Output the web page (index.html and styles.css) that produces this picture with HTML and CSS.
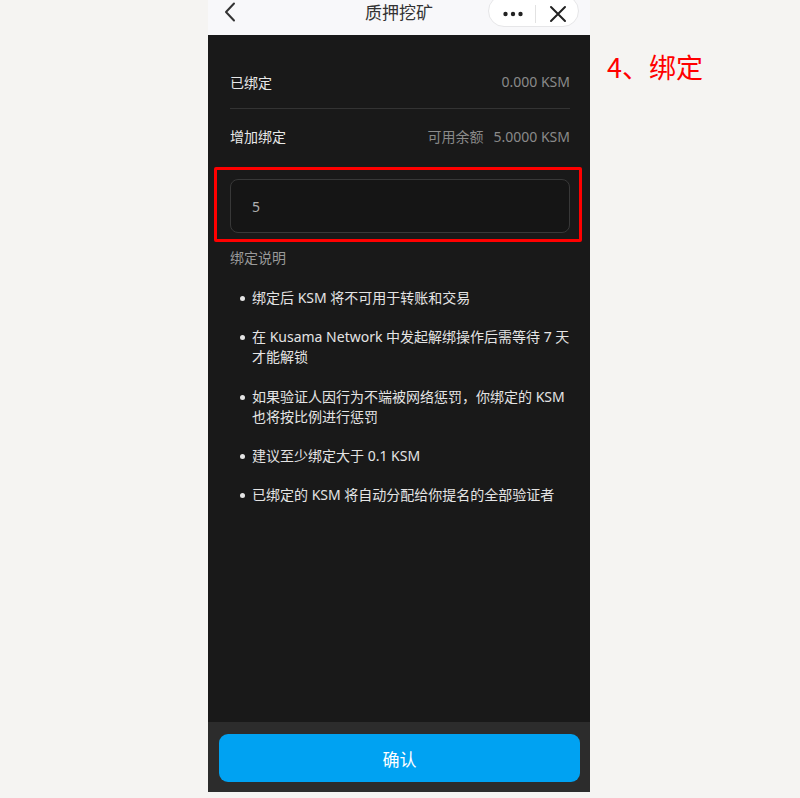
FILE: index.html
```html
<!DOCTYPE html>
<html lang="zh-CN">
<head>
<meta charset="utf-8">
<title>质押挖矿</title>
<link rel="stylesheet" href="styles.css">
</head>
<body>
<div class="page">
  <div class="phone">
    <header class="nav">
      <div class="nav-left">
        <svg class="back" width="12" height="20" viewBox="0 0 12 20"><path d="M10 1.5 L2 10 L10 18.5" fill="none" stroke="#333" stroke-width="2" stroke-linecap="round" stroke-linejoin="round"/></svg>
      </div>
      <div class="nav-title">质押挖矿</div>
      <div class="nav-right">
        <div class="capsule">
          <svg class="dots" width="20" height="6" viewBox="0 0 20 6"><circle cx="2.5" cy="3" r="2.2" fill="#222"/><circle cx="10" cy="3" r="2.2" fill="#222"/><circle cx="17.5" cy="3" r="2.2" fill="#222"/></svg>
          <span class="cap-div"></span>
          <svg class="close" width="18" height="18" viewBox="0 0 18 18"><path d="M2 2 L16 16 M16 2 L2 16" stroke="#222" stroke-width="2" stroke-linecap="round"/></svg>
        </div>
      </div>
    </header>
    <main class="content">
      <div class="row row-first">
        <span class="row-label">已绑定</span>
        <span class="row-value">0.000 KSM</span>
      </div>
      <div class="row">
        <span class="row-label">增加绑定</span>
        <span class="row-value"><span class="avail">可用余额</span>5.0000 KSM</span>
      </div>
      <div class="input-wrap">
        <div class="input">5</div>
        <div class="highlight"></div>
      </div>
      <div class="desc-title">绑定说明</div>
      <ul class="desc-list">
        <li>绑定后 KSM 将不可用于转账和交易</li>
        <li>在 Kusama Network 中发起解绑操作后需等待 7 天才能解锁</li>
        <li>如果验证人因行为不端被网络惩罚，你绑定的 KSM 也将按比例进行惩罚</li>
        <li>建议至少绑定大于 0.1 KSM</li>
        <li>已绑定的 KSM 将自动分配给你提名的全部验证者</li>
      </ul>
    </main>
    <footer class="bottom">
      <button class="confirm">确认</button>
    </footer>
  </div>
  <div class="step">4、绑定</div>
</div>
</body>
</html>
```

FILE: styles.css
```css
* { box-sizing: border-box; }
html, body {
  margin: 0;
  padding: 0;
}
body {
  background: #f5f4f2;
  width: 800px;
  height: 798px;
  overflow: hidden;
  font-family: "Noto Sans", "Noto Sans CJK SC", sans-serif;
}
.page {
  display: flex;
  align-items: flex-start;
  padding-left: 208px;
}
.phone {
  width: 382px;
  height: 792px;
  display: flex;
  flex-direction: column;
  background: #191919;
}
.nav {
  height: 35px;
  flex: none;
  background: #f8f8fa;
  display: grid;
  grid-template-columns: 1fr auto 1fr;
  align-items: start;
}
.nav-left {
  padding-left: 16px;
  padding-top: 2px;
}
.back { display: block; }
.nav-title {
  font-family: "Noto Sans CJK SC", sans-serif;
  font-size: 17px;
  line-height: 24px;
  color: #333;
}
.nav-right {
  display: flex;
  justify-content: flex-end;
  padding-right: 11px;
}
.capsule {
  margin-top: -5px;
  width: 91px;
  height: 32px;
  border: 1px solid #e6e6e8;
  border-radius: 16px;
  background: #fff;
  display: flex;
  align-items: center;
  padding-left: 14px;
  padding-top: 5px;
}
.dots { display: block; }
.cap-div {
  width: 1px;
  height: 18px;
  background: #e2e2e2;
  margin-left: 12px;
  margin-right: 13px;
}
.close { display: block; }

.content {
  flex: 1;
  padding: 20px 20px 0 22px;
  color: #e6e6e6;
}
.row {
  height: 54px;
  display: flex;
  align-items: center;
  justify-content: space-between;
  font-size: 14px;
}
.row-first {
  border-bottom: 1px solid #333;
}
.row-label {
  font-family: "Noto Sans CJK SC", sans-serif;
  color: #e8e8e8;
}
.row-value {
  color: #8a8a8a;
}
.avail {
  font-family: "Noto Sans CJK SC", sans-serif;
  margin-right: 10px;
}
.input-wrap {
  position: relative;
  margin-top: 16px;
}
.input {
  height: 54px;
  border: 1px solid #383838;
  border-radius: 8px;
  background: #151515;
  display: flex;
  align-items: center;
  padding-left: 21px;
  color: #b0b0b0;
  font-size: 14px;
}
.highlight {
  position: absolute;
  left: -16px;
  top: -12px;
  right: -12px;
  bottom: -9px;
  border: 3px solid #ff0000;
  border-radius: 2px;
  pointer-events: none;
}
.desc-title {
  margin-top: 14px;
  font-family: "Noto Sans CJK SC", sans-serif;
  font-size: 14px;
  line-height: 20px;
  color: #9a9a9a;
}
.desc-list {
  list-style: none;
  margin: 21px 0 0 0;
  padding: 0 0 0 22px;
}
.desc-list li {
  position: relative;
  font-size: 14px;
  line-height: 20px;
  color: #e4e4e4;
  margin-bottom: 19.3px;
}
.desc-list li::before {
  content: "";
  position: absolute;
  left: -12px;
  top: 8px;
  width: 5px;
  height: 5px;
  border-radius: 50%;
  background: #e4e4e4;
}
.bottom {
  height: 70px;
  flex: none;
  background: #2c2c2c;
  padding: 12px 10px 10px 11px;
}
.confirm {
  width: 100%;
  height: 48px;
  border: none;
  border-radius: 9px;
  background: #00a2f2;
  color: #fff;
  font-family: "Noto Sans CJK SC", sans-serif;
  font-size: 17px;
  display: block;
}
.step {
  margin-left: 17px;
  margin-top: 49px;
  font-family: "Noto Sans CJK SC", sans-serif;
  font-size: 27px;
  line-height: 36px;
  color: #ff0000;
}
```
